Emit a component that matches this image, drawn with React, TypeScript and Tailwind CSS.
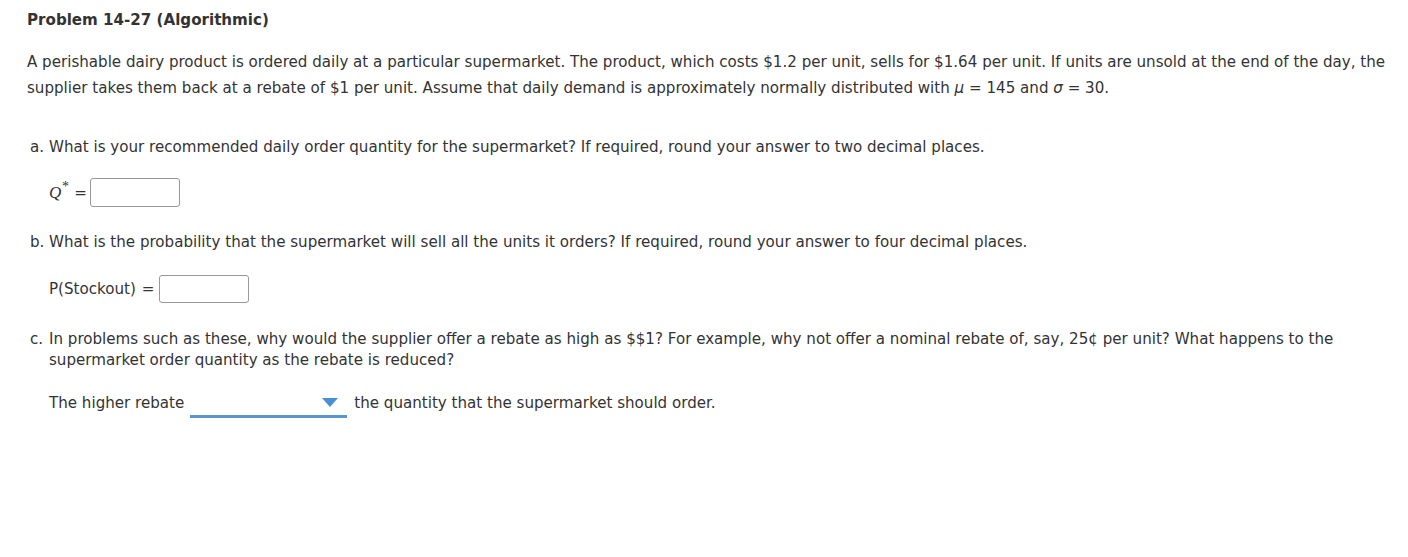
export default function App() {
  return (
    <div className="min-h-screen bg-white text-[#333] text-[15.1px] font-['Verdana','DejaVu_Sans',sans-serif] pl-[27px] pr-[12px] pt-[11px]">
      <h1 className="font-bold leading-[18px]">Problem 14-27 (Algorithmic)</h1>

      <p className="mt-[20px] leading-[26px]">
        A perishable dairy product is ordered daily at a particular supermarket. The product, which costs $1.2 per unit, sells
        for $1.64 per unit. If units are unsold at the end of the day, the supplier takes them back at a rebate of $1 per
        unit. Assume that daily demand is approximately normally distributed with <i>μ</i> = 145 and <i>σ</i> = 30.
      </p>

      <ol className="mt-[36px] pl-[3px]">
        {/* part a */}
        <li className="flex leading-[20px]">
          <span className="w-[19px] shrink-0">a.</span>
          <div className="flex-1">
            <div>
              What is your recommended daily order quantity for the supermarket? If required, round your answer to two
              decimal places.
            </div>
            <div className="flex items-center mt-[21px]">
              <span className="relative font-['Liberation_Serif',serif] italic text-[17px] leading-[20px]">
                Q
                <span className="absolute -top-[6px] left-[13px] text-[14px] not-italic">*</span>
              </span>
              <span className="ml-[13px]">=</span>
              <input className="ml-[3px] w-[90px] h-[29px] border border-[#999] rounded-[3px] outline-none" />
            </div>
          </div>
        </li>

        {/* part b */}
        <li className="flex leading-[20px] mt-[25px]">
          <span className="w-[19px] shrink-0">b.</span>
          <div className="flex-1">
            <div>
              What is the probability that the supermarket will sell all the units it orders? If required, round your answer
              to four decimal places.
            </div>
            <div className="flex items-center mt-[23px]">
              <span>P(Stockout)</span>
              <span className="ml-[6px]">=</span>
              <input className="ml-[4px] w-[90px] h-[28px] border border-[#999] rounded-[3px] outline-none" />
            </div>
          </div>
        </li>

        {/* part c */}
        <li className="flex leading-[21px] mt-[26px]">
          <span className="w-[19px] shrink-0">c.</span>
          <div className="flex-1 pr-[40px]">
            <div>
              In problems such as these, why would the supplier offer a rebate as high as $$1? For example, why not offer a
              nominal rebate of, say, 25¢ per unit? What happens to the supermarket order quantity as the rebate is reduced?
            </div>
            <div className="flex items-center mt-[18px]">
              <span>The higher rebate</span>
              <div className="ml-[6px] w-[157px] h-[24px] border-b-[3px] border-[#5a96cc] flex items-center justify-end pr-[9px] mt-[5px]">
                <svg width="16" height="9" viewBox="0 0 16 9" className="-mt-[5px]">
                  <path d="M0 0 H16 L8 9 Z" fill="#4a8fd0" />
                </svg>
              </div>
              <span className="ml-[7px]">the quantity that the supermarket should order.</span>
            </div>
          </div>
        </li>
      </ol>
    </div>
  );
}
